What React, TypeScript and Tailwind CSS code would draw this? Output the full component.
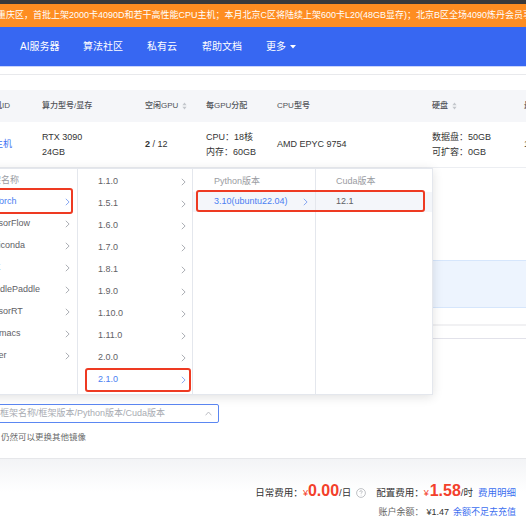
import React from "react";

const Chevron = ({ color = "#a3a6ad" }: { color?: string }) => (
  <svg width="5" height="8" viewBox="0 0 5 8" fill="none">
    <path d="M0.8 0.8 L4.1 4 L0.8 7.2" stroke={color} strokeWidth="0.9" />
  </svg>
);

const SortIcon = () => (
  <svg width="5" height="8" viewBox="0 0 5 8" className="ml-[4px]">
    <path d="M2.5 0.5 L4.6 3.2 L0.4 3.2 Z" fill="#c3c6cc" />
    <path d="M2.5 7.5 L4.6 4.8 L0.4 4.8 Z" fill="#c3c6cc" />
  </svg>
);

const Item = ({
  text,
  active,
  arrow = true,
  pl,
  pr,
  h = "h-[22px]",
  bg = "",
}: {
  text: string;
  active?: boolean;
  arrow?: boolean;
  pl: string;
  pr: string;
  h?: string;
  bg?: string;
}) => (
  <div className={`flex items-center justify-between whitespace-nowrap ${h} ${pl} ${pr} ${bg}`}>
    <span className={active ? "text-[#4a7ef2]" : "text-[#5f6166]"}>{text}</span>
    {arrow && <Chevron color={active ? "#7d9ff0" : "#a3a6ad"} />}
  </div>
);

export default function App() {
  const col1 = ["PyTorch", "TensorFlow", "Miniconda", "JAX", "PaddlePaddle", "TensorRT", "Gromacs", "Other"];
  const col2 = ["1.1.0", "1.5.1", "1.6.0", "1.7.0", "1.8.1", "1.9.0", "1.10.0", "1.11.0", "2.0.0", "2.1.0"];
  return (
    <div className="relative w-[526px] h-[526px] overflow-hidden bg-white flex flex-col font-['Liberation_Sans','Noto_Sans_CJK_SC',sans-serif]">
      {/* top dark strip */}
      <div className="h-[4px] bg-[#3a3a3a] shrink-0" />
      {/* banner */}
      <div className="h-[23px] shrink-0 bg-[#fe8d21] text-white text-[9px] leading-[23px] whitespace-nowrap overflow-hidden">
        <span className="ml-[-3px] inline-block">
          重庆区，首批上架2000卡4090D和若干高性能CPU主机；本月北京C区将陆续上架600卡L20(48GB显存)；北京B区全场4090炼丹会员享受折扣
        </span>
      </div>
      {/* nav */}
      <div className="h-[39px] shrink-0 bg-[#3767f2] flex items-center pl-[20px] text-white text-[10px] whitespace-nowrap">
        <span className="w-[63px] shrink-0">AI服务器</span>
        <span className="w-[64px] shrink-0">算法社区</span>
        <span className="w-[55px] shrink-0">私有云</span>
        <span className="w-[64px] shrink-0">帮助文档</span>
        <span className="flex items-center">
          更多
          <svg width="6" height="4" viewBox="0 0 6 4" className="ml-[4px]">
            <path d="M0 0 L6 0 L3 3.5 Z" fill="white" />
          </svg>
        </span>
      </div>
      <div className="h-[1px] shrink-0 bg-[#c9d5fb]" />
      <div className="h-[7px] shrink-0" />
      <div className="h-[1px] shrink-0 bg-[#e8e9ec]" />
      <div className="h-[15px] shrink-0" />

      {/* table header */}
      <div className="h-[32px] shrink-0 bg-[#f5f6f9] flex items-center text-[8px] font-medium text-[#505258] whitespace-nowrap overflow-hidden">
        <div className="w-[42px] shrink-0">
          <span className="ml-[-14px]">主机ID</span>
        </div>
        <div className="w-[103px] shrink-0">算力型号/显存</div>
        <div className="w-[61px] shrink-0 flex items-center">
          空闲GPU
          <SortIcon />
        </div>
        <div className="w-[71px] shrink-0">每GPU分配</div>
        <div className="w-[155px] shrink-0">CPU型号</div>
        <div className="w-[92px] shrink-0 flex items-center">
          硬盘
          <SortIcon />
        </div>
        <div className="shrink-0">最高CUDA</div>
      </div>
      {/* table row */}
      <div className="h-[46px] shrink-0 border-b border-[#eceef2] flex items-center text-[9px] leading-[15px] text-[#333] whitespace-nowrap overflow-hidden">
        <div className="w-[42px] shrink-0">
          <span className="ml-[-6px] text-[#3d72f2]">主机</span>
        </div>
        <div className="w-[103px] shrink-0 flex flex-col">
          <span>RTX 3090</span>
          <span>24GB</span>
        </div>
        <div className="w-[61px] shrink-0">
          <span className="font-bold">2</span> / 12
        </div>
        <div className="w-[71px] shrink-0 flex flex-col">
          <span>CPU：18核</span>
          <span>内存：60GB</span>
        </div>
        <div className="w-[155px] shrink-0">AMD EPYC 9754</div>
        <div className="w-[92px] shrink-0 flex flex-col">
          <span>数据盘：50GB</span>
          <span>可扩容：0GB</span>
        </div>
        <div className="shrink-0">12.4</div>
      </div>

      <div className="h-[92px] shrink-0" />
      <div className="h-[48px] shrink-0 bg-[#edf4fe] border-y border-[#d6e6fc]" />
      <div className="h-[16px] shrink-0" />
      <div className="h-[2px] shrink-0 bg-[#f1f1f3]" />
      <div className="h-[12px] shrink-0" />
      <div className="h-[1px] shrink-0 bg-[#e2e2ea]" />
      <div className="h-[65px] shrink-0" />

      {/* select input */}
      <div className="h-[19px] shrink-0 ml-[-10px] w-[229px] border border-[#5b87f2] rounded-[2px] flex items-center justify-between pl-[9px] pr-[6px] text-[9px] text-[#a8abb2] whitespace-nowrap">
        <span>框架名称/框架版本/Python版本/Cuda版本</span>
        <svg width="7" height="5" viewBox="0 0 7 5" fill="none">
          <path d="M0.6 4.3 L3.5 1 L6.4 4.3" stroke="#b4b7bd" strokeWidth="0.9" />
        </svg>
      </div>
      <div className="h-[8px] shrink-0" />
      <div className="h-[12px] shrink-0 leading-[12px] text-[8.5px] text-[#666] pl-[1px] whitespace-nowrap">仍然可以更换其他镜像</div>
      <div className="h-[15px] shrink-0" />
      <div className="h-[1px] shrink-0 bg-[#e6e7ea]" />

      {/* footer */}
      <div className="flex-1 relative flex flex-col items-end pr-[10px] bg-gradient-to-b from-[#f3f4f6] via-white to-white">
        <div className="h-[24px] shrink-0" />
        <div className="flex items-baseline whitespace-nowrap text-[9.5px] text-[#333] h-[20px]">
          <span>日常费用：</span>
          <span className="text-[#f3402b] text-[9px]">¥</span>
          <span className="text-[#f3402b] text-[16px] font-bold leading-[16px]">0.00</span>
          <span>/日</span>
          <span className="ml-[5px] self-center flex items-center">
            <svg width="10" height="10" viewBox="0 0 10 10" fill="none">
              <circle cx="5" cy="5" r="4.4" stroke="#a5a8ae" strokeWidth="0.7" />
              <path d="M3.7 3.9 C3.7 3.1 4.3 2.7 5 2.7 C5.8 2.7 6.3 3.2 6.3 3.8 C6.3 4.6 5.1 4.7 5.1 5.7" stroke="#a5a8ae" strokeWidth="0.7" fill="none" />
              <circle cx="5.1" cy="7.1" r="0.45" fill="#a5a8ae" />
            </svg>
          </span>
          <span className="ml-[10px]">配置费用：</span>
          <span className="text-[#f3402b] text-[9px]">¥</span>
          <span className="text-[#f3402b] text-[16px] font-bold leading-[16px] ml-[1px]">1.58</span>
          <span>/时</span>
          <span className="ml-[5px] text-[#3c6ff0]">费用明细</span>
        </div>
        <div className="flex items-center whitespace-nowrap text-[9px] text-[#666] h-[18px] mt-[1px]">
          <span>账户余额：</span>
          <span className="ml-[3px] text-[#333]">¥1.47</span>
          <span className="ml-[4px] text-[#3c6ff0]">余额不足去充值</span>
        </div>
      </div>

      {/* cascader dropdown overlay */}
      <div className="absolute top-[168px] left-[-60px] w-[493px] h-[227px] bg-white border border-[#e4e7ed] shadow-[0_2px_10px_rgba(0,0,0,0.12)] flex text-[9px]">
        <div className="w-[137px] border-r border-[#e4e7ed] pt-[2px]">
          <div className="h-[20px] flex items-center pl-[42px] text-[#9a9ca2] whitespace-nowrap">框架名称</div>
          {col1.map((t, i) => (
            <Item key={t} text={t} active={i === 0} pl="pl-[43px]" pr="pr-[7px]" />
          ))}
        </div>
        <div className="w-[115px] border-r border-[#e4e7ed] pt-[2px]">
          {col2.map((t, i) => (
            <Item key={t} text={t} active={i === col2.length - 1} pl="pl-[20px]" pr="pr-[6px]" />
          ))}
        </div>
        <div className="w-[123px] border-r border-[#e4e7ed] pt-[2px]">
          <div className="h-[21px] flex items-center pl-[21px] text-[#9a9ca2]">Python版本</div>
          <Item text="3.10(ubuntu22.04)" active pl="pl-[21px]" pr="pr-[7px]" h="h-[20px]" bg="bg-[#f4f6fa]" />
        </div>
        <div className="flex-1 pt-[2px]">
          <div className="h-[21px] flex items-center pl-[20px] text-[#9a9ca2]">Cuda版本</div>
          <Item text="12.1" arrow={false} pl="pl-[20px]" pr="pr-[7px]" h="h-[20px]" bg="bg-[#f4f6fa]" />
        </div>
      </div>

      {/* red highlight boxes */}
      <div className="absolute top-[188px] left-[-10px] w-[83px] h-[26px] border-2 border-[#ee3a22] rounded-[3px]" />
      <div className="absolute top-[368px] left-[85px] w-[106px] h-[24px] border-2 border-[#ee3a22] rounded-[3px]" />
      <div className="absolute top-[190px] left-[196px] w-[229px] h-[22px] border-2 border-[#ee3a22] rounded-[3px]" />
    </div>
  );
}
